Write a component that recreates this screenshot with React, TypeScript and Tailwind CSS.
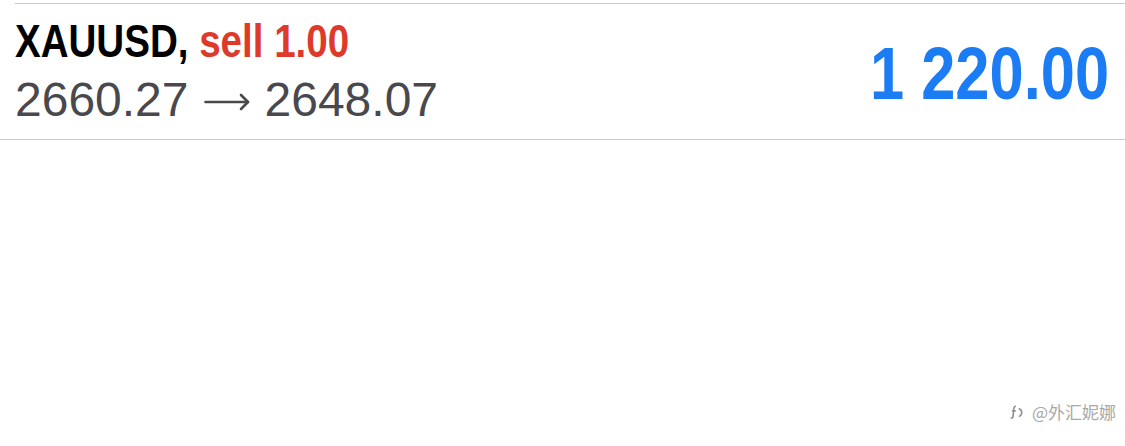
import React from "react";

export default function App() {
  return (
    <div className="relative h-[446px] w-full bg-white" style={{ fontFamily: '"Liberation Sans", Arial, sans-serif' }}>
      <div className="pt-[3px]">
        <div className="ml-[15px] h-px bg-[#c8c8c8]" />
        <div className="flex h-[135px] items-start justify-between pl-[15px] pr-[16px]">
          <div className="flex flex-col pt-[13px]">
            <div className="inline-block origin-left scale-x-[0.82] whitespace-nowrap text-[47px] font-bold leading-none">
              <span className="text-black">XAUUSD, </span>
              <span className="text-[#dd3a2c]">sell 1.00</span>
            </div>
            <div className="mt-[12px] flex items-center whitespace-nowrap text-[48px] leading-none text-[#48484d]">
              <span>2660.27</span>
              <svg className="mx-[15px] mt-[4px]" width="46" height="18" viewBox="0 0 46 18" fill="none" stroke="#48484d" strokeWidth="2.6" strokeLinecap="round" strokeLinejoin="round">
                <path d="M1.5 9 H44" />
                <path d="M37 2 L44 9 L37 16" />
              </svg>
              <span>2648.07</span>
            </div>
          </div>
          <div className="pt-[33px]">
            <div className="inline-block origin-right scale-x-[0.83] whitespace-nowrap text-[74px] font-bold leading-none text-[#1b7cf4]">
              1 220.00
            </div>
          </div>
        </div>
        <div className="h-px bg-[#c8c8c8]" />
      </div>
      <div className="absolute right-[9px] top-[403px] flex items-center gap-[7px] text-[#a8a8a8]">
        <svg width="16" height="16" viewBox="0 0 14 14" fill="none" stroke="#8f8f8f" strokeWidth="1.4">
          <path d="M6 2 C4 2 4 4 4 6 L3.5 11 C3.3 12.5 2.2 12.5 1.5 12" />
          <path d="M2.5 6 H6" />
          <path d="M8.5 4 C12 5 12 10 8.5 11" />
        </svg>
        <span className="text-[17px] leading-none" style={{ fontFamily: '"Noto Sans CJK SC", sans-serif' }}>@外汇妮娜</span>
      </div>
    </div>
  );
}
